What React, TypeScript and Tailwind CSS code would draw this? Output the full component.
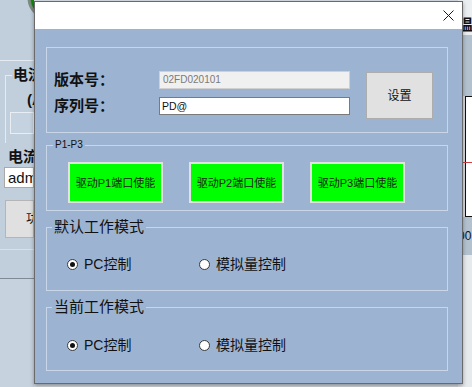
import React from "react";

const cjk = "font-['Liberation_Sans','Noto_Sans_CJK_SC',sans-serif]";

function Radio({ checked, label, width }: { checked?: boolean; label: string; width?: string }) {
  return (
    <div className={`flex items-center gap-[6px] ${width ?? ""}`}>
      <span className="w-[11px] h-[11px] rounded-full border border-[#3a3a3a] bg-white flex items-center justify-center shrink-0">
        {checked && <span className="w-[5px] h-[5px] rounded-full bg-[#111]" />}
      </span>
      <span className="text-[14px] leading-[16px] text-[#111]">{label}</span>
    </div>
  );
}

function GreenBtn({ n }: { n: number }) {
  return (
    <div className="w-[95px] h-[41px] border-2 border-[#e2e2e2] bg-[#00ff00] flex items-center justify-center text-[11px] leading-[14px] text-[#1c1c1c]">
      驱动P{n}端口使能
    </div>
  );
}

function LeftStrip() {
  return (
    <div className={`w-[34px] h-full bg-[#c1cfdd] overflow-hidden flex flex-col shrink-0 ${cjk}`}>
      <svg width="34" height="60" className="shrink-0">
        <circle cx="49" cy="-2" r="20" fill="#12850f" stroke="#7d8a80" strokeWidth="3" />
      </svg>
      <div className="h-px bg-[#e4ebf2] shrink-0" />
      <div className="mt-[14px] ml-[5px] h-[68px] border-l border-t border-[#e4ebf2] relative shrink-0">
        <div className="flex flex-col">
          <span className="-mt-[10px] ml-[6px] bg-[#c1cfdd] pl-[1px] text-[15px] leading-[18px] font-bold text-[#111] whitespace-nowrap">电流</span>
          <span className="ml-[21px] mt-[7px] text-[15px] leading-[18px] font-bold text-[#111] whitespace-nowrap">(A</span>
          <div className="ml-[4px] mt-[3px] h-[22px] border border-[#e8eef4] bg-[#c5d2df]" />
        </div>
      </div>
      <span className="mt-[5px] ml-[8px] text-[15px] leading-[18px] font-bold text-[#111] whitespace-nowrap">电流</span>
      <div className="mt-[1px] ml-[4px] h-[21px] border border-[#a9a9a9] bg-white pl-[3px] text-[15px] leading-[19px] text-[#111] whitespace-nowrap overflow-hidden">adm</div>
      <div className="mt-[12px] ml-[5px] h-[38px] border border-[#b5b5b5] bg-[#e0e0e0] flex items-center pl-[20px] text-[12px] text-[#111] whitespace-nowrap overflow-hidden">功</div>
      <div className="mt-[11px] h-px bg-[#d8e0e8] shrink-0" />
      <div className="mt-[28px] h-px bg-[#7f8a96] shrink-0" />
      <div className="flex-1 bg-[#c6d2de]" />
    </div>
  );
}

function RightStrip() {
  return (
    <div className={`w-[14px] h-full flex flex-col overflow-hidden shrink-0 ${cjk}`}>
      <div className="h-[35px] bg-[#eceff2] flex items-end pb-[2px]">
        <span className="text-[15px] leading-[16px] font-bold text-[#111] whitespace-nowrap">温</span>
      </div>
      <div className="h-[61px] bg-[#b3c1cf]" />
      <div className="h-[121px] bg-white border-l border-t border-b border-[#111] ml-[7px] flex flex-col">
        <div className="mt-[65px] h-px bg-[#d04040] -ml-[8px]" />
      </div>
      <div className="h-[38px] bg-[#b3c1cf] flex items-center">
        <span className="text-[12px] text-[#111] whitespace-nowrap">00</span>
      </div>
      <div className="flex-1 bg-[#e7eaed]" />
    </div>
  );
}

export default function App() {
  return (
    <div className={`w-[472px] h-[387px] relative overflow-hidden bg-[#d9dee4] ${cjk}`}>
      <div className="flex h-full">
        <LeftStrip />
        <div className="flex-1 bg-[#d5dce4]" />
        <RightStrip />
      </div>

      {/* dialog window */}
      <div className="absolute left-[34px] top-[1px] w-[429px] h-[383px] border border-[#6a6a6a] flex flex-col shadow-[0_2px_4px_rgba(0,0,0,0.35)]">
        <div className="h-[27px] bg-white flex items-center justify-end pr-[8px] shrink-0">
          <svg width="11" height="11" viewBox="0 0 11 11">
            <path d="M0.5 0.5 L10.5 10.5 M10.5 0.5 L0.5 10.5" stroke="#1a1a1a" strokeWidth="1" />
          </svg>
        </div>
        <div className="flex-1 bg-[#9cb4d2] pl-[11px] pr-[14px] pt-[18px] flex flex-col">
          {/* group 1 */}
          <div className="h-[86px] border border-[#c9d6e8] pl-[7px] pt-[23px] flex items-start">
            <div className="flex flex-col gap-[8px]">
              <div className="flex items-center h-[18px]">
                <span className="w-[105px] text-[15px] leading-[18px] font-bold text-[#111]">版本号：</span>
                <div className="w-[191px] h-[18px] border border-[#d0d0d0] bg-[#f0f0f0] pl-[3px] text-[10px] leading-[16px] text-[#7a7a7a]">02FD020101</div>
              </div>
              <div className="flex items-center h-[18px]">
                <span className="w-[105px] text-[15px] leading-[18px] font-bold text-[#111]">序列号：</span>
                <div className="w-[191px] h-[18px] border border-[#7a7a7a] bg-white pl-[2px] text-[10.5px] leading-[16px] text-[#111]">PD@</div>
              </div>
            </div>
            <div className="ml-[16px] mt-[1px] w-[67px] h-[47px] border border-[#adadad] bg-[#e1e1e1] flex items-center justify-center text-[12px] text-[#111]">
              设置
            </div>
          </div>

          {/* group 2 */}
          <fieldset className="mt-[6px] border border-[#c9d6e8] px-0">
            <legend className="ml-[6px] px-[2px] text-[10px] leading-[12px] text-[#111]">P1-P3</legend>
            <div className="pl-[21px] pt-[11px] pb-[7px] flex gap-[26px]">
              <GreenBtn n={1} />
              <GreenBtn n={2} />
              <GreenBtn n={3} />
            </div>
          </fieldset>

          {/* group 3 */}
          <fieldset className="mt-[6px] border border-[#c9d6e8] px-0">
            <legend className="ml-[5px] px-[2px] text-[15px] leading-[20px] text-[#111]">默认工作模式</legend>
            <div className="pl-[20px] pt-[19px] pb-[18px] flex">
              <Radio checked label="PC控制" width="w-[132px]" />
              <Radio label="模拟量控制" />
            </div>
          </fieldset>

          {/* group 4 */}
          <fieldset className="mt-[6px] border border-[#c9d6e8] px-0">
            <legend className="ml-[5px] px-[2px] text-[15px] leading-[20px] text-[#111]">当前工作模式</legend>
            <div className="pl-[20px] pt-[20px] pb-[17px] flex">
              <Radio checked label="PC控制" width="w-[132px]" />
              <Radio label="模拟量控制" />
            </div>
          </fieldset>
        </div>
      </div>
    </div>
  );
}
